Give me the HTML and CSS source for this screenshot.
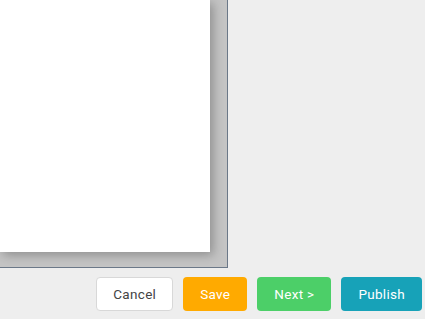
FILE: index.html
```html
<!DOCTYPE html>
<html lang="en">
<head>
  <meta charset="UTF-8">
  <meta name="viewport" content="width=device-width, initial-scale=1.0">
  <title>Editor</title>
  <link rel="stylesheet" href="styles.css">
</head>
<body>

  <!-- canvas area -->
  <div class="workspace">
    <div class="sheet"></div>
  </div>

  <!-- actions -->
  <div class="actions">
    <button class="btn btn-cancel">Cancel</button>
    <button class="btn btn-save">Save</button>
    <button class="btn btn-next">Next &gt;</button>
    <button class="btn btn-publish">Publish</button>
  </div>

</body>
</html>
```

FILE: styles.css
```css
body {
  margin: 0;
  background-color: #eeeeee;
  font-family: Roboto, "Liberation Sans", sans-serif;
  overflow: hidden;
}
.workspace {
  width: 210px;
  height: 252px;
  padding: 0 17px 15px 0;
  background-color: #c4c4c4;
  border-right: 1px solid #6b7888;
  border-bottom: 1px solid #6b7888;
}
.sheet {
  width: 100%;
  height: 100%;
  background-color: #ffffff;
  box-shadow: 3px 3px 10px rgba(0, 0, 0, 0.28);
}
.actions {
  display: flex;
  justify-content: flex-end;
  gap: 10px;
  margin-top: 9px;
  padding-right: 3px;
}
.btn {
  height: 34px;
  padding: 0 16px;
  font-family: Roboto, "Liberation Sans", sans-serif;
  font-size: 13.5px;
  letter-spacing: 0.3px;
  color: #ffffff;
  border: 1px solid transparent;
  border-radius: 4px;
  cursor: pointer;
}
.btn-cancel {
  background-color: #ffffff;
  color: #444444;
  border-color: #d8d8d8;
}
.btn-save {
  background-color: #ffaa00;
}
.btn-next {
  background-color: #4ccf68;
}
.btn-publish {
  background-color: #17a2b8;
}
```
